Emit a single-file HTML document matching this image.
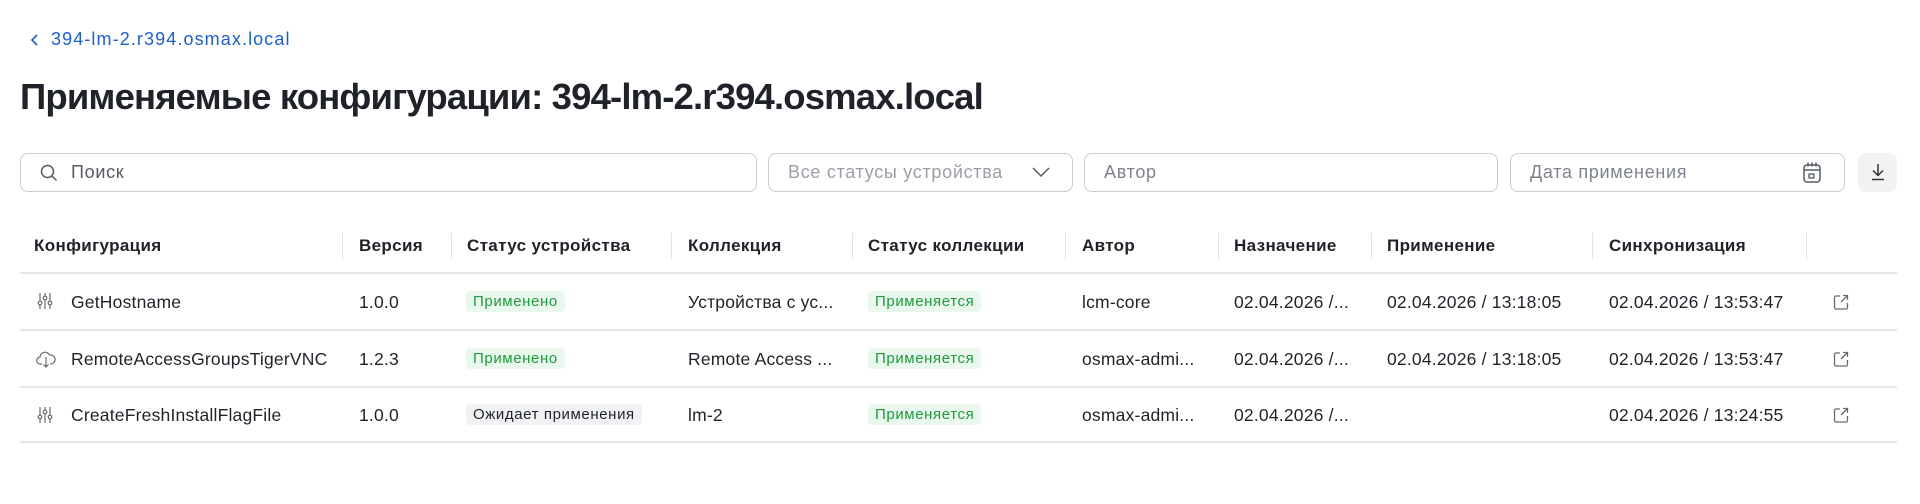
<!DOCTYPE html>
<html><head><meta charset="utf-8"><style>
*{box-sizing:border-box;margin:0;padding:0}
body{width:1920px;height:504px;background:#fff;font-family:"Liberation Sans",sans-serif;color:#1f2329;position:relative;overflow:hidden}
.abs{position:absolute}
.back{left:30px;top:28px;color:#1a5fd8;font-size:18px;line-height:22px;letter-spacing:1.1px}
.back svg{position:absolute;left:0;top:6px}
.back span{position:absolute;left:21px;white-space:nowrap}
h1{position:absolute;left:20px;top:76px;font-size:36.5px;font-weight:bold;letter-spacing:-0.85px;white-space:nowrap;line-height:42px}
.inp{position:absolute;top:153px;height:39px;border:1.5px solid #c9ccd2;border-radius:8px;font-size:18px;letter-spacing:0.7px;color:#7d828c;line-height:36px;padding-left:19px;white-space:nowrap}
.btn{position:absolute;left:1858px;top:153px;width:39px;height:39px;border-radius:8px;background:#f1f2f4}
.hd{position:absolute;top:236px;font-size:17px;letter-spacing:0.35px;font-weight:bold;white-space:nowrap}
.sep{position:absolute;top:233px;width:1px;height:27px;background:#e2e4e8}
.line{position:absolute;left:20px;width:1877px;height:2px;background:#e4e6ea}
.c{position:absolute;font-size:17.5px;letter-spacing:0.2px;white-space:nowrap;line-height:20px}
.b{position:absolute;font-size:15px;letter-spacing:0.6px;line-height:21px;height:21px;padding:0 7px;border-radius:4px;white-space:nowrap}
.g{background:#e9f8ed;color:#1f9a3e}
.gr{background:#f1f2f4;color:#1f2329}
</style></head><body>
<div class="abs back"><svg width="10" height="12" viewBox="0 0 10 12"><path d="M7 1L2 6l5 5" fill="none" stroke="#1a5fd8" stroke-width="1.6"/></svg><span>394-lm-2.r394.osmax.local</span></div>
<h1>Применяемые конфигурации: 394-lm-2.r394.osmax.local</h1>

<div class="inp" style="left:20px;width:737px;padding-left:50px;color:#555a63">Поиск
<svg class="abs" style="left:18px;top:9px" width="20" height="20" viewBox="0 0 20 20"><circle cx="8.5" cy="8.5" r="6" fill="none" stroke="#555a63" stroke-width="1.5"/><path d="M13 13l4.5 4.5" stroke="#555a63" stroke-width="1.5"/></svg></div>
<div class="inp" style="left:768px;width:305px;color:#9a9ea6">Все статусы устройства
<svg class="abs" style="left:262px;top:11px" width="20" height="14" viewBox="0 0 20 14"><path d="M2 3l8 8 8-8" fill="none" stroke="#555a63" stroke-width="1.5"/></svg></div>
<div class="inp" style="left:1084px;width:414px">Автор</div>
<div class="inp" style="left:1510px;width:335px">Дата применения
<svg class="abs" style="left:290px;top:7px" width="22" height="24" viewBox="0 0 22 24"><rect x="3" y="4" width="16" height="17" rx="3" fill="none" stroke="#555a63" stroke-width="1.5"/><path d="M3 9h16M7 1.5v4M11 1.5v4M15 1.5v4" stroke="#555a63" stroke-width="1.5"/><rect x="8" y="13" width="5" height="4" fill="none" stroke="#555a63" stroke-width="1.3"/></svg></div>
<div class="btn"><svg class="abs" style="left:10px;top:9px" width="20" height="20" viewBox="0 0 20 20"><path d="M10 2v11M5 8.5l5 5 5-5M4 17.5h12" fill="none" stroke="#333" stroke-width="1.5"/></svg></div>

<div class="hd" style="left:34px">Конфигурация</div>
<div class="hd" style="left:359px">Версия</div>
<div class="hd" style="left:467px">Статус устройства</div>
<div class="hd" style="left:688px">Коллекция</div>
<div class="hd" style="left:868px">Статус коллекции</div>
<div class="hd" style="left:1082px">Автор</div>
<div class="hd" style="left:1234px">Назначение</div>
<div class="hd" style="left:1387px">Применение</div>
<div class="hd" style="left:1609px">Синхронизация</div>
<div class="sep" style="left:342px"></div><div class="sep" style="left:451px"></div><div class="sep" style="left:671px"></div><div class="sep" style="left:852px"></div><div class="sep" style="left:1065px"></div><div class="sep" style="left:1218px"></div><div class="sep" style="left:1371px"></div><div class="sep" style="left:1592px"></div><div class="sep" style="left:1806px"></div>
<div class="line" style="top:272px"></div>
<div class="line" style="top:329px"></div>
<div class="line" style="top:386px"></div>
<div class="line" style="top:441px"></div>

<svg class="abs" style="left:37px;top:292px" width="16" height="18" viewBox="0 0 16 18"><g fill="none" stroke="#666b73" stroke-width="1.2"><path d="M3 1v8M3 13v4M8 1v3M8 8v9M13 1v8M13 13v4"/><circle cx="3" cy="11" r="1.8"/><circle cx="8" cy="6" r="1.8"/><circle cx="13" cy="11" r="1.8"/></g></svg>
<div class="c" style="left:71px;top:292px">GetHostname</div>
<div class="c" style="left:359px;top:292px">1.0.0</div>
<div class="b g" style="left:466px;top:291px">Применено</div>
<div class="c" style="left:688px;top:292px">Устройства с ус...</div>
<div class="b g" style="left:868px;top:291px">Применяется</div>
<div class="c" style="left:1082px;top:292px">lcm-core</div>
<div class="c" style="left:1234px;top:292px">02.04.2026 /...</div>
<div class="c" style="left:1387px;top:292px">02.04.2026 / 13:18:05</div>
<div class="c" style="left:1609px;top:292px">02.04.2026 / 13:53:47</div>

<svg class="abs" style="left:36px;top:350px" width="20" height="18" viewBox="0 0 20 18"><g fill="none" stroke="#666b73" stroke-width="1.2"><path d="M6 14H4.5a3.5 3.5 0 0 1-.5-7A5 5 0 0 1 13.5 5a3.5 3.5 0 0 1 2 9H14"/><path d="M10 7v10M7.5 14.5L10 17l2.5-2.5"/></g></svg>
<div class="c" style="left:71px;top:349px">RemoteAccessGroupsTigerVNC</div>
<div class="c" style="left:359px;top:349px">1.2.3</div>
<div class="b g" style="left:466px;top:348px">Применено</div>
<div class="c" style="left:688px;top:349px">Remote Access ...</div>
<div class="b g" style="left:868px;top:348px">Применяется</div>
<div class="c" style="left:1082px;top:349px">osmax-admi...</div>
<div class="c" style="left:1234px;top:349px">02.04.2026 /...</div>
<div class="c" style="left:1387px;top:349px">02.04.2026 / 13:18:05</div>
<div class="c" style="left:1609px;top:349px">02.04.2026 / 13:53:47</div>

<svg class="abs" style="left:37px;top:406px" width="16" height="18" viewBox="0 0 16 18"><g fill="none" stroke="#666b73" stroke-width="1.2"><path d="M3 1v8M3 13v4M8 1v3M8 8v9M13 1v8M13 13v4"/><circle cx="3" cy="11" r="1.8"/><circle cx="8" cy="6" r="1.8"/><circle cx="13" cy="11" r="1.8"/></g></svg>
<div class="c" style="left:71px;top:405px">CreateFreshInstallFlagFile</div>
<div class="c" style="left:359px;top:405px">1.0.0</div>
<div class="b gr" style="left:466px;top:404px">Ожидает применения</div>
<div class="c" style="left:688px;top:405px">lm-2</div>
<div class="b g" style="left:868px;top:404px">Применяется</div>
<div class="c" style="left:1082px;top:405px">osmax-admi...</div>
<div class="c" style="left:1234px;top:405px">02.04.2026 /...</div>
<div class="c" style="left:1609px;top:405px">02.04.2026 / 13:24:55</div>

<svg class="abs" style="left:1832px;top:293px" width="18" height="18" viewBox="0 0 18 18"><path d="M8 3H4a1.5 1.5 0 0 0-1.5 1.5v10A1.5 1.5 0 0 0 4 16h10a1.5 1.5 0 0 0 1.5-1.5V10M11 2.5h4.5V7M15.5 2.5L9 9" fill="none" stroke="#666b73" stroke-width="1.3"/></svg>
<svg class="abs" style="left:1832px;top:350px" width="18" height="18" viewBox="0 0 18 18"><path d="M8 3H4a1.5 1.5 0 0 0-1.5 1.5v10A1.5 1.5 0 0 0 4 16h10a1.5 1.5 0 0 0 1.5-1.5V10M11 2.5h4.5V7M15.5 2.5L9 9" fill="none" stroke="#666b73" stroke-width="1.3"/></svg>
<svg class="abs" style="left:1832px;top:406px" width="18" height="18" viewBox="0 0 18 18"><path d="M8 3H4a1.5 1.5 0 0 0-1.5 1.5v10A1.5 1.5 0 0 0 4 16h10a1.5 1.5 0 0 0 1.5-1.5V10M11 2.5h4.5V7M15.5 2.5L9 9" fill="none" stroke="#666b73" stroke-width="1.3"/></svg>
</body></html>
